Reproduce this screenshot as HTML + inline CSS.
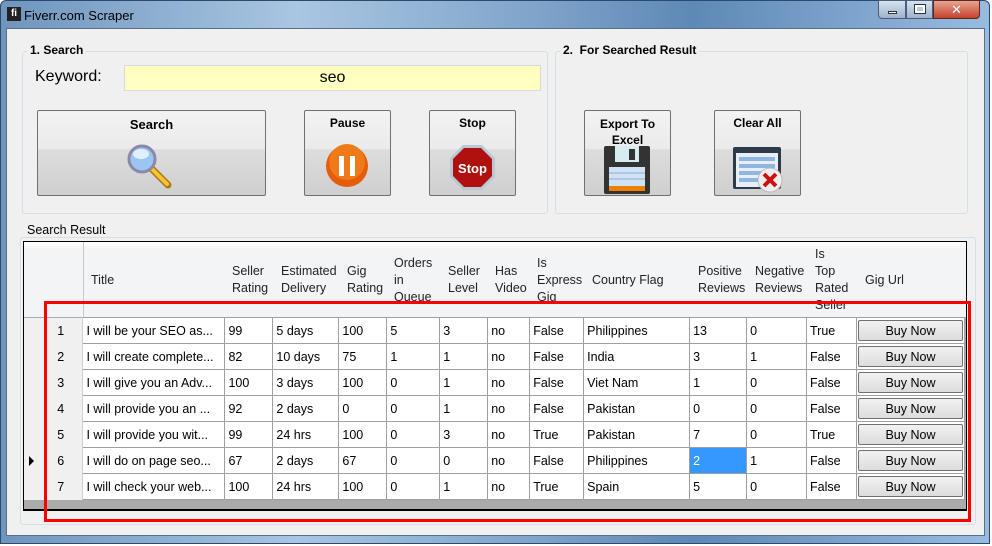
<!DOCTYPE html>
<html><head><style>
*{box-sizing:border-box;margin:0;padding:0}
body{width:992px;height:546px;overflow:hidden;background:#fff;font-family:"Liberation Sans","DejaVu Sans",sans-serif;position:relative}
.abs{position:absolute}
.win{left:0;top:0;width:990px;height:544px;border:1px solid #2b4a6e;border-radius:6px 6px 0 0;background:linear-gradient(90deg,#6f95bd 0%,#a9c6e2 30%,#7ea3c9 55%,#5e88b6 70%,#98bce0 100%)}
.client{left:6px;top:28px;width:979px;height:508px;background:#f0f0f0;border:1px solid #58708c}
.title{left:24px;top:8px;font-size:13px;color:#000}
.ico{left:7px;top:7px;width:14px;height:14px;background:#222;color:#fff;font-size:10px;font-weight:bold;line-height:14px;text-align:center}
.grp{border:1px solid #d5dfe5;border-radius:3px}
.gl{background:#f0f0f0;font-size:12px;font-weight:bold;padding:0 3px}
.btn{border:1px solid #707070;border-radius:2px;background:linear-gradient(#f2f2f2 0,#ebebeb 45%,#dddddd 46%,#cfcfcf 100%);text-align:center;font-size:12px;font-weight:bold}
table{border-collapse:collapse;font-size:12.5px}
td{border:1px solid #a0a0a0;height:26px;padding:0 3px;white-space:nowrap;overflow:hidden;background:#fff}
td.rh{background:#f0f0f0;border:none;border-right:1px solid #d0d0d0;text-align:center;padding-left:18px}
.hd{font-size:12.5px;color:#222;line-height:17px}
.bn{display:block;border:1px solid #707070;border-radius:2px;background:linear-gradient(#f2f2f2,#dcdcdc);text-align:center;height:21px;line-height:20px;margin:0 -2px}
</style></head><body>
<div class="abs win"></div>
<div class="abs ico">fi</div>
<div class="abs title">Fiverr.com Scraper</div>
<div class="abs" style="left:878px;top:0;width:28px;height:19px;border:1px solid #4a5e78;border-radius:0 0 0 4px;background:linear-gradient(#d6e2ef,#9db3cc)"><div class="abs" style="left:9px;top:10px;width:9px;height:3px;background:#fff;border:1px solid #333"></div></div>
<div class="abs" style="left:906px;top:0;width:27px;height:19px;border:1px solid #4a5e78;background:linear-gradient(#d6e2ef,#9db3cc)"><div class="abs" style="left:8px;top:4px;width:10px;height:8px;border:2px solid #fff;outline:1px solid #333"></div></div>
<div class="abs" style="left:933px;top:0;width:47px;height:19px;border:1px solid #5a2a20;border-radius:0 0 4px 0;background:linear-gradient(#e8a592,#c4422c);color:#fff;font-weight:bold;text-align:center;font-size:13px;line-height:17px">✕</div>
<div class="abs client"></div>

<div class="abs grp" style="left:22px;top:51px;width:526px;height:163px"></div>
<div class="abs gl" style="left:27px;top:43px">1. Search</div>
<div class="abs" style="left:35px;top:68px;font-size:16px">Keyword:</div>
<div class="abs" style="left:124px;top:65px;width:417px;height:26px;background:#ffffc0;border:1px solid #d6dde2;text-align:center;font-size:16px;line-height:24px">seo</div>
<div class="abs btn" style="left:37px;top:110px;width:229px;height:86px;padding-top:6px;font-size:13px">Search
<svg class="abs" style="left:88px;top:32px" width="46" height="46"><line x1="26" y1="26" x2="42" y2="42" stroke="#b07a10" stroke-width="7" stroke-linecap="round"/><line x1="26" y1="26" x2="41" y2="41" stroke="#f6c33a" stroke-width="4" stroke-linecap="round"/><circle cx="16" cy="16" r="13" fill="#9cc6f2" stroke="#8a8aa8" stroke-width="3"/><ellipse cx="15" cy="11" rx="8" ry="5" fill="#e0efff"/></svg></div>
<div class="abs btn" style="left:304px;top:110px;width:87px;height:86px;padding-top:5px">Pause
<svg class="abs" style="left:20px;top:33px" width="44" height="44"><circle cx="22" cy="22" r="21" fill="#e65c0a"/><circle cx="22" cy="18" r="18" fill="#f07a1a"/><rect x="14" y="12" width="5" height="20" fill="#fff"/><rect x="25" y="12" width="5" height="20" fill="#fff"/></svg></div>
<div class="abs btn" style="left:429px;top:110px;width:87px;height:86px;padding-top:5px">Stop
<svg class="abs" style="left:19px;top:33px" width="47" height="47"><polygon points="14,1 33,1 46,14 46,33 33,46 14,46 1,33 1,14" fill="#b9c8d4"/><polygon points="15,4 32,4 43,15 43,32 32,43 15,43 4,32 4,15" fill="#b01010"/><text x="23.5" y="29" font-size="13" font-weight="bold" fill="#fff" text-anchor="middle" font-family="Liberation Sans">Stop</text></svg></div>

<div class="abs grp" style="left:555px;top:51px;width:413px;height:163px"></div>
<div class="abs gl" style="left:560px;top:43px">2.&nbsp; For Searched Result</div>
<div class="abs btn" style="left:584px;top:110px;width:87px;height:86px;padding-top:5px;line-height:16px">Export To<br>Excel
<svg class="abs" style="left:19px;top:35px" width="46" height="48"><rect x="0" y="0" width="46" height="48" rx="2" fill="#333"/><rect x="11" y="0" width="24" height="16" fill="#d6ecef"/><rect x="25" y="3" width="6" height="11" fill="#333"/><rect x="5" y="21" width="36" height="23" fill="#cfe3f7"/><line x1="5" y1="27" x2="41" y2="27" stroke="#9ab"/><line x1="5" y1="33" x2="41" y2="33" stroke="#9ab"/><rect x="5" y="40" width="36" height="5" fill="#f08000"/></svg></div>
<div class="abs btn" style="left:714px;top:110px;width:87px;height:86px;padding-top:5px">Clear All
<svg class="abs" style="left:18px;top:36px" width="50" height="46"><rect x="0" y="0" width="48" height="42" rx="2" fill="#2e3a48"/><rect x="3" y="6" width="42" height="34" fill="#e7eef6"/><rect x="6" y="10" width="36" height="4" fill="#8fb6e0"/><rect x="6" y="17" width="36" height="4" fill="#8fb6e0"/><rect x="6" y="24" width="36" height="4" fill="#8fb6e0"/><rect x="6" y="31" width="36" height="4" fill="#8fb6e0"/><circle cx="37" cy="33" r="12" fill="#eee" stroke="#bbb"/><path d="M31 27 L43 39 M43 27 L31 39" stroke="#d01010" stroke-width="4"/></svg></div>

<div class="abs grp" style="left:20px;top:237px;width:956px;height:288px"></div>
<div class="abs" style="left:24px;top:223px;background:#f0f0f0;font-size:12.5px;padding:0 3px">Search Result</div>
<div class="abs" style="left:23px;top:241px;width:944px;height:270px;background:#ababab;border:1px solid #000;border-bottom:2px solid #000"></div>
<div class="abs" style="left:24px;top:242px;width:942px;height:75px;background:linear-gradient(#fff 0,#f3f4f6 10%,#f3f4f6 100%)"></div>
<div class="abs hd" style="left:24px;top:242px;width:942px;height:75px">
<div class="abs" style="left:59px;top:0;width:1px;height:75px;background:#c8c8c8"></div>
<div class="abs" style="left:67px;top:30px">Title</div>
<div class="abs" style="left:208px;top:21px">Seller<br>Rating</div>
<div class="abs" style="left:257px;top:21px">Estimated<br>Delivery</div>
<div class="abs" style="left:323px;top:21px">Gig<br>Rating</div>
<div class="abs" style="left:370px;top:13px;height:60px;overflow:hidden">Orders<br>in<br>Queue</div>
<div class="abs" style="left:424px;top:21px">Seller<br>Level</div>
<div class="abs" style="left:471px;top:21px">Has<br>Video</div>
<div class="abs" style="left:513px;top:13px;height:60px;overflow:hidden">Is<br>Express<br>Gig</div>
<div class="abs" style="left:568px;top:30px">Country Flag</div>
<div class="abs" style="left:674px;top:21px">Positive<br>Reviews</div>
<div class="abs" style="left:731px;top:21px">Negative<br>Reviews</div>
<div class="abs" style="left:791px;top:4px">Is<br>Top<br>Rated<br>Seller</div>
<div class="abs" style="left:841px;top:30px">Gig Url</div>
</div>
<table class="abs" style="left:24px;top:317px;width:941px">
<colgroup><col style="width:59px"><col style="width:142px"><col style="width:48px"><col style="width:66px"><col style="width:48px"><col style="width:53px"><col style="width:48px"><col style="width:42px"><col style="width:54px"><col style="width:106px"><col style="width:57px"><col style="width:60px"><col style="width:50px"><col style="width:108px"></colgroup>
<tr><td class="rh">1</td><td>I will be your SEO as...</td><td>99</td><td>5 days</td><td>100</td><td>5</td><td>3</td><td>no</td><td>False</td><td>Philippines</td><td>13</td><td>0</td><td>True</td><td><span class="bn">Buy Now</span></td></tr>
<tr><td class="rh">2</td><td>I will create complete...</td><td>82</td><td>10 days</td><td>75</td><td>1</td><td>1</td><td>no</td><td>False</td><td>India</td><td>3</td><td>1</td><td>False</td><td><span class="bn">Buy Now</span></td></tr>
<tr><td class="rh">3</td><td>I will give you an Adv...</td><td>100</td><td>3 days</td><td>100</td><td>0</td><td>1</td><td>no</td><td>False</td><td>Viet Nam</td><td>1</td><td>0</td><td>False</td><td><span class="bn">Buy Now</span></td></tr>
<tr><td class="rh">4</td><td>I will provide you an ...</td><td>92</td><td>2 days</td><td>0</td><td>0</td><td>1</td><td>no</td><td>False</td><td>Pakistan</td><td>0</td><td>0</td><td>False</td><td><span class="bn">Buy Now</span></td></tr>
<tr><td class="rh">5</td><td>I will provide you wit...</td><td>99</td><td>24 hrs</td><td>100</td><td>0</td><td>3</td><td>no</td><td>True</td><td>Pakistan</td><td>7</td><td>0</td><td>True</td><td><span class="bn">Buy Now</span></td></tr>
<tr><td class="rh" style="position:relative"><span style="position:absolute;left:5px;top:8px;border-left:5px solid #000;border-top:5px solid transparent;border-bottom:5px solid transparent"></span>6</td><td>I will do on page seo...</td><td>67</td><td>2 days</td><td>67</td><td>0</td><td>0</td><td>no</td><td>False</td><td>Philippines</td><td style="background:#3399ff;color:#fff">2</td><td>1</td><td>False</td><td><span class="bn">Buy Now</span></td></tr>
<tr><td class="rh">7</td><td>I will check your web...</td><td>100</td><td>24 hrs</td><td>100</td><td>0</td><td>1</td><td>no</td><td>True</td><td>Spain</td><td>5</td><td>0</td><td>False</td><td><span class="bn">Buy Now</span></td></tr>
</table>
<div class="abs" style="left:44px;top:301px;width:927px;height:221px;border:3px solid #f00"></div>
</body></html>
